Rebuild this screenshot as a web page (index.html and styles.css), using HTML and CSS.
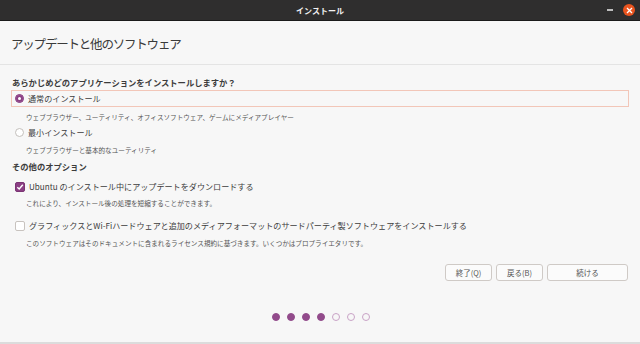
FILE: index.html
```html
<!DOCTYPE html>
<html>
  <head>
    <title>インストール</title>
    <link rel="stylesheet" href="styles.css">
  </head>
  <body>
    <div class="window">
      <div class="titlebar">
        <span></span>
        <span class="title">インストール</span>
        <div class="controls">
          <span class="minimize"></span>
          <span class="close">
            <svg width="7" height="7" viewBox="0 0 7 7"><path d="M1 1L6 6M6 1L1 6" stroke="#fff" stroke-width="1.3"/></svg>
          </span>
        </div>
      </div>

      <div class="header">アップデートと他のソフトウェア</div>

      <div class="content">
        <div class="heading q">あらかじめどのアプリケーションをインストールしますか？</div>

        <div class="option focused">
          <span class="radio checked"></span>
          <span>通常のインストール</span>
        </div>
        <div class="desc d1">ウェブブラウザー、ユーティリティ、オフィスソフトウェア、ゲームにメディアプレイヤー</div>

        <div class="option o2">
          <span class="radio"></span>
          <span>最小インストール</span>
        </div>
        <div class="desc d2">ウェブブラウザーと基本的なユーティリティ</div>

        <div class="heading h2">その他のオプション</div>

        <div class="option o3">
          <span class="check checked">
            <svg width="8" height="8" viewBox="0 0 8 8"><path d="M1.3 4.2L3.2 6L6.8 1.8" fill="none" stroke="#fff" stroke-width="1.4"/></svg>
          </span>
          <span>Ubuntu のインストール中にアップデートをダウンロードする</span>
        </div>
        <div class="desc d3">これにより、インストール後の処理を短縮することができます。</div>

        <div class="option o4">
          <span class="check"></span>
          <span>グラフィックスとWi-Fiハードウェアと追加のメディアフォーマットのサードパーティ製ソフトウェアをインストールする</span>
        </div>
        <div class="desc d4">このソフトウェアはそのドキュメントに含まれるライセンス規約に基づきます。いくつかはプロプライエタリです。</div>

        <div class="buttons">
          <button class="btn">終了(Q)</button>
          <button class="btn">戻る(B)</button>
          <button class="btn wide">続ける</button>
        </div>

        <div class="dots">
          <span class="dot done"></span>
          <span class="dot done"></span>
          <span class="dot done"></span>
          <span class="dot done"></span>
          <span class="dot"></span>
          <span class="dot"></span>
          <span class="dot"></span>
        </div>
      </div>
    </div>
  </body>
</html>
```

FILE: styles.css
```css
body {
  margin: 0;
  background: #f7f7f7;
  font-family: "Noto Sans CJK JP", "Noto Sans", sans-serif;
  color: #3c3c3c;
}

.window {
  width: 640px;
  height: 344px;
  display: flex;
  flex-direction: column;
  border-bottom: 2px solid #dcdcdc;
  box-sizing: border-box;
}

/* Title bar */
.titlebar {
  height: 20px;
  background: #2f2e2e;
  border-bottom: 1px solid #1b1b1b;
  display: grid;
  grid-template-columns: 1fr auto 1fr;
  align-items: center;
}

.title {
  color: #f2f2f2;
  font-weight: bold;
  font-size: 8px;
}

.controls {
  display: flex;
  justify-content: flex-end;
  align-items: center;
  gap: 10px;
  padding-right: 5px;
}

.minimize {
  width: 6px;
  height: 2px;
  background: #bdbdbd;
}

.close {
  width: 12px;
  height: 12px;
  border-radius: 50%;
  background: #e9541f;
  display: flex;
  align-items: center;
  justify-content: center;
}

/* Page header */
.header {
  height: 43px;
  padding-left: 11px;
  font-size: 12.5px;
  line-height: 46px;
  letter-spacing: -1.2px;
  border-bottom: 1px solid #e4e4e4;
  color: #3a3a3a;
}

.content {
  padding: 0 11px;
  display: flex;
  flex-direction: column;
}

.heading {
  height: 12px;
  line-height: 12px;
  font-size: 8.3px;
  font-weight: bold;
  padding-left: 1px;
}

.q { margin-top: 11px; }
.h2 { margin-top: 4px; }

.option {
  height: 15px;
  display: flex;
  align-items: center;
  gap: 4px;
  padding-left: 3px;
  font-size: 8.1px;
  border: 1px solid transparent;
}

.focused {
  margin-top: 2px;
  border-color: #f2c6b8;
}

.o2 { margin-top: 1px; }
.o3 { margin-top: 6px; }
.o4 { margin-top: 8px; }

.radio {
  width: 7px;
  height: 7px;
  border-radius: 50%;
  border: 1px solid #c4c0bc;
  background: #fff;
}

.radio.checked {
  border-color: #8b3f84;
  box-shadow: inset 0 0 0 2px #8b3f84, inset 0 0 0 3.5px #fff;
  background: #8b3f84;
}

.check {
  width: 8px;
  height: 8px;
  border-radius: 2px;
  border: 1px solid #c8c3bf;
  background: #fff;
  display: flex;
  align-items: center;
  justify-content: center;
}

.check.checked {
  background: #8b3f84;
  border-color: #7b3574;
}

.desc {
  height: 12px;
  line-height: 12px;
  font-size: 6.6px;
  color: #555;
  padding-left: 15px;
}

.d1 { margin-top: 4px; }
.d2 { margin-top: 3px; }
.d3 { margin-top: 2px; }
.d4 { margin-top: 3px; }

/* Footer buttons */
.buttons {
  margin-top: 15px;
  display: flex;
  justify-content: flex-end;
  gap: 4px;
  padding-right: 1px;
}

.btn {
  width: 47px;
  height: 17px;
  padding: 0;
  font-family: inherit;
  font-size: 7.5px;
  color: #555;
  background: #fbfbfb;
  border: 1px solid #cfcac6;
  border-radius: 3px;
}

.btn.wide {
  width: 81px;
}

/* Progress dots */
.dots {
  margin-top: 32px;
  display: flex;
  justify-content: center;
  gap: 7px;
  padding-left: 1px;
}

.dot {
  width: 6px;
  height: 6px;
  border-radius: 50%;
  border: 1px solid #c9a3c6;
  background: #f7f7f7;
}

.dot.done {
  background: #924b8b;
  border-color: #924b8b;
}
```
